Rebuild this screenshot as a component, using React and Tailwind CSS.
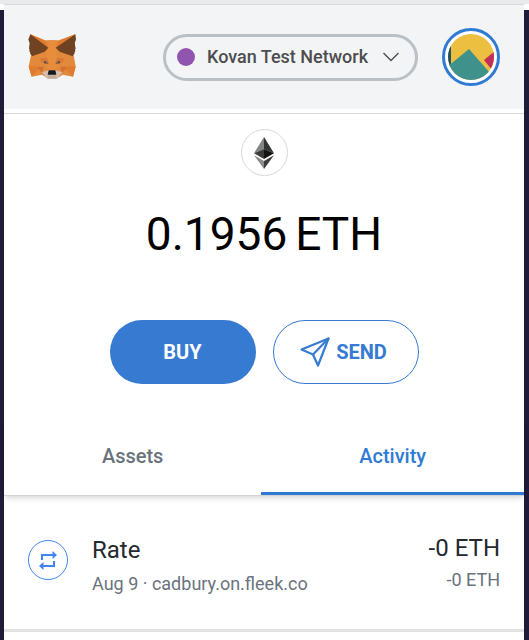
import { useState } from "react";

const FoxLogo = () => (
  <svg viewBox="86 103 150 140" className="w-[50px] h-[47px]" aria-hidden="true">
    <path fill="#e2893b" d="M93 103 L136 121 H180 L228 103 L226 152 L223 166 L229 200 L221 231 L190 225 L172 236 H146 L128 225 L97 231 L88 200 L95 166 L91 150 Z" />
    <path fill="#e88d3b" d="M147 121 H168 L174 186 L170 210 H146 L140 186 Z" />
    <path fill="#e07b2f" d="M93 103 L136 121 L147 145 Z M228 103 L180 121 L169 145 Z" />
    <path fill="#e07b2f" d="M88 200 H125 L97 231 Z M229 200 H190 L221 231 Z" />
    <path fill="#cf6f33" d="M114 202 L134 201 L127 218 Z M203 202 L182 201 L189 218 Z" />
    <path fill="#d87836" d="M120 177 L142 174 L150 193 L131 190 Z M197 177 L174 174 L166 193 L185 190 Z" />
    <path fill="#6f4322" d="M93 103 L147 144 L136 156 L98 169 L95 163 L92 162 L93 157 L90 155 L91 149 L89 147 L91 130 L87 119 Z" />
    <path fill="#6f4322" d="M228 103 L169 144 L181 156 L220 169 L223 163 L226 162 L225 157 L228 155 L227 149 L229 147 L226 130 L230 119 Z" />
    <path fill="#243447" d="M134 184 L143 186 L145 191 L136 190 Z M182 184 L173 186 L171 191 L180 190 Z" />
    <path fill="#7e9aad" d="M139 186 h4 v3 h-4 Z M173 186 h4 v3 h-4 Z" />
    <path fill="#d5bfb2" d="M128 217 L147 211 H170 L189 217 L173 236 H144 Z" />
    <path fill="#c0ad9e" d="M146 226 H170 L173 236 H144 Z" />
    <path fill="#17191a" d="M148 211 H168 L171 225 H145 Z" />
  </svg>
);

const EthLogo = () => (
  <svg viewBox="0 0 60 96" className="w-5 h-8" aria-hidden="true">
    <path fill="#828384" d="M30 0 L0 49 L30 36 Z" />
    <path fill="#343434" d="M30 0 L60 49 L30 36 Z" />
    <path fill="#3c3c3b" d="M0 49 L30 36 V66 Z" />
    <path fill="#141414" d="M60 49 L30 36 V66 Z" />
    <path fill="#8c8c8c" d="M0 55 L30 72 V96 Z" />
    <path fill="#3c3c3b" d="M60 55 L30 72 V96 Z" />
  </svg>
);

const AccountAvatar = () => (
  <svg viewBox="0 0 48 48" className="w-12 h-12" aria-hidden="true">
    <defs>
      <clipPath id="avatar">
        <circle cx="24" cy="24" r="23" />
      </clipPath>
    </defs>
    <g clipPath="url(#avatar)">
      <path fill="#ecbf40" d="M0 0 H48 V48 H0 Z" />
      <path fill="#1c5064" d="M0 0 H4 V34 H0 Z" />
      <path fill="#c32d58" d="M48 18 L37 27 L45 37 L48 34 Z" />
      <path fill="#3f918c" d="M0 34 L22 16 L43 40 L36 48 H0 Z" />
    </g>
  </svg>
);

const SendIcon = () => (
  <svg viewBox="0 0 30 30" className="w-[30px] h-[30px]" fill="none" stroke="currentColor" strokeWidth="2.2" strokeLinejoin="round" strokeLinecap="round" aria-hidden="true">
    <path d="M28.5 1.5 L1.5 12.5 L13 17.5 L18 28.5 Z" />
    <path d="M28.5 1.5 L13 17.5" />
  </svg>
);

const SwapIcon = () => (
  <svg viewBox="0 0 20 20" className="w-5 h-5" aria-hidden="true">
    <g fill="none" stroke="currentColor" strokeWidth="2.1">
      <path d="M4 10 V5 H15" />
      <path d="M16 11 V16 H5" />
    </g>
    <path fill="currentColor" d="M14.5 1 L19 5 L14.5 9 Z M5.5 12 L1 16 L5.5 20 Z" />
  </svg>
);

const transactions = [
  {
    id: 1,
    title: "Rate",
    date: "Aug 9",
    origin: "cadbury.on.fleek.co",
    primary: "-0 ETH",
    secondary: "-0 ETH",
  },
];

const App = () => {
  const [tab, setTab] = useState("activity");

  return (
    <div className="min-h-screen flex flex-col bg-[#1f1b38] font-[Roboto,sans-serif]">
      <div className="h-1 bg-[#e9eaeb]" />
      <div className="flex-1 flex bg-linear-to-b from-white from-[6px] to-[#1f1b38] to-[6px]">
        <div className="flex-1 ml-1 mr-[5px] flex flex-col bg-white border-t border-[#d8d8da]">
          {/* Header */}
          <header className="h-[104px] px-6 flex items-center justify-between bg-[#f2f4f6]">
            <FoxLogo />
            <div className="flex items-center gap-6">
              <button className="w-[255px] h-[47px] pl-[11px] pr-4 flex items-center rounded-full border-[3px] border-[#bbc0c5] text-[#4d4d4d]">
                <span className="w-[18px] h-[18px] rounded-full bg-[#9055af]" />
                <span className="flex-1 pl-3 text-left text-lg font-medium whitespace-nowrap">Kovan Test Network</span>
                <svg viewBox="0 0 16 10" className="w-4 h-[10px]" fill="none" stroke="currentColor" strokeWidth="1.4" aria-hidden="true">
                  <path d="M0.5 1 L8 8.5 L15.5 1" />
                </svg>
              </button>
              <button aria-label="Account" className="w-[58px] h-[58px] flex items-center justify-center rounded-full border-[3px] border-[#2f7bd3] bg-white">
                <AccountAvatar />
              </button>
            </div>
          </header>

          {/* Balance */}
          <main className="mt-1 flex-1 border-t border-[#d6d9dc]">
            <section className="pt-[15px] flex flex-col items-center">
              <div className="w-[47px] h-[47px] flex items-center justify-center rounded-full border border-[#d6d9dc]">
                <EthLogo />
              </div>
              <div className="mt-7 flex gap-2 text-[46px] leading-[60px] text-black">
                <span>0.1956</span>
                <span>ETH</span>
              </div>
              <div className="mt-14 flex gap-[17px] text-xl font-bold">
                <button className="w-[146px] h-16 rounded-full bg-[#367bd1] text-white">BUY</button>
                <button className="w-[146px] h-16 pr-1 flex items-center justify-center gap-[6px] rounded-full border border-[#367bd1] text-[#367bd1]">
                  <SendIcon />
                  SEND
                </button>
              </div>
            </section>

            {/* Tabs */}
            <div role="tablist" className="mt-9 flex text-xl font-medium border-b border-[#d2d4d6] shadow-md">
              <button
                role="tab"
                aria-selected={tab === "assets"}
                onClick={() => setTab("assets")}
                className={`flex-auto h-[75px] border-b-[3px] ${tab === "assets" ? "border-[#2f7bd3] text-[#2f7bd3]" : "border-transparent text-[#6a737d]"}`}
              >
                Assets
              </button>
              <button
                role="tab"
                aria-selected={tab === "activity"}
                onClick={() => setTab("activity")}
                className={`flex-auto h-[75px] border-b-[3px] ${tab === "activity" ? "border-[#2f7bd3] text-[#2f7bd3]" : "border-transparent text-[#6a737d]"}`}
              >
                Activity
              </button>
            </div>

            {/* Transactions */}
            <ul>
              {transactions.map((tx) => (
                <li key={tx.id} className="h-[136px] px-6 pt-8 flex items-start border-b-[3px] border-[#e2e3e4]">
                  <span className="mt-3 w-10 h-10 flex items-center justify-center rounded-full border border-[#4285ee] text-[#4285ee]">
                    <SwapIcon />
                  </span>
                  <div className="ml-6 mt-1 flex-1">
                    <h2 className="text-2xl leading-9 text-[#24292e]">{tx.title}</h2>
                    <p className="text-lg leading-8 text-[#6a737d]">
                      {tx.date} · {tx.origin}
                    </p>
                  </div>
                  <div className="mt-[2px] text-right">
                    <p className="text-2xl leading-9 text-[#24292e]">{tx.primary}</p>
                    <p className="text-lg leading-7 text-[#6a737d]">{tx.secondary}</p>
                  </div>
                </li>
              ))}
            </ul>
          </main>
        </div>
      </div>
    </div>
  );
};

export default App;
